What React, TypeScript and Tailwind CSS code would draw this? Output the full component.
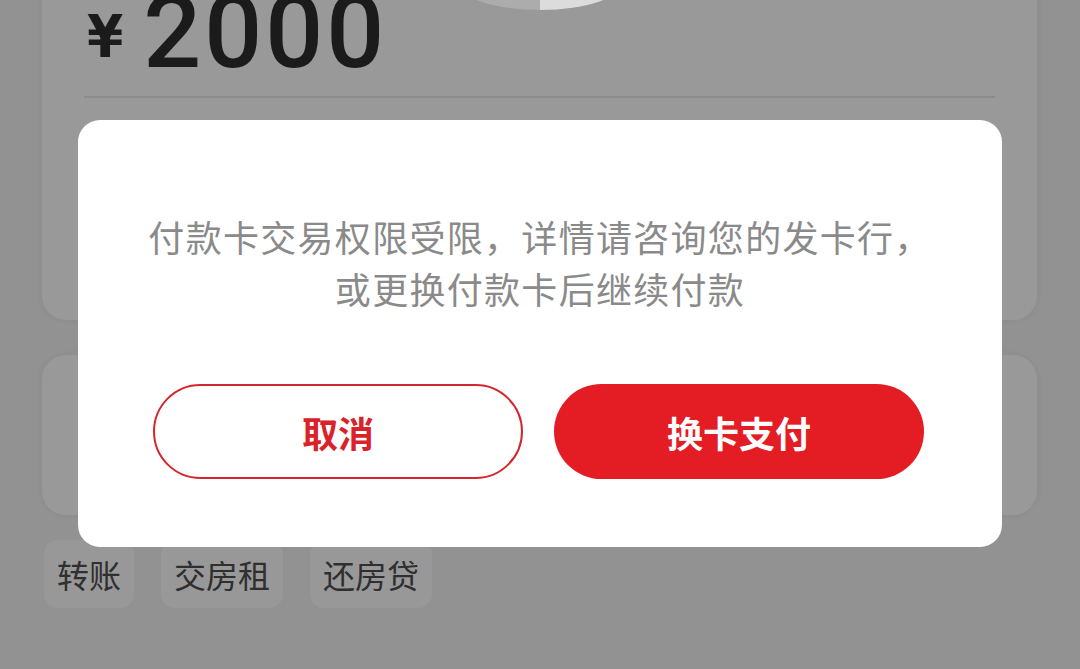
import React from "react";

const cjk = { fontFamily: '"Noto Sans CJK SC", "Noto Sans", sans-serif' };

export default function App() {
  return (
    <div
      className="relative w-[1080px] h-[669px] overflow-hidden bg-[#929292]"
      style={cjk}
    >
      {/* page underneath (dimmed) */}
      <div className="flex flex-col pl-[42px] pr-[43px]">
        {/* amount card */}
        <div className="relative -mt-[40px] h-[360px] rounded-[24px] bg-[#999999] px-[42px] shadow-[0_0_6px_rgba(0,0,0,0.06)]">
          <div className="absolute left-1/2 top-[-10px] h-[60px] w-[170px] -translate-x-1/2 overflow-hidden rounded-[50%] flex">
            <div className="flex-1 bg-[#acacac]" />
            <div className="flex-1 bg-[#dcdcdc]" />
          </div>
          <div className="flex items-end h-[118px] gap-[20px] pl-[3px]">
            <span
              className="text-[58px] leading-none font-bold text-[#1b1b1b] mb-[12px]"
              style={{ fontFamily: '"DejaVu Sans Condensed", "Liberation Sans", sans-serif' }}
            >
              ¥
            </span>
            <span
              className="text-[102px] leading-none font-medium text-[#1b1b1b] tracking-[3px] mb-[-5px]"
              style={{ fontFamily: 'Roboto, sans-serif' }}
            >
              2000
            </span>
          </div>
          <div className="mt-[18px] h-[1.5px] bg-[#8b8b8b]" />
        </div>

        {/* second card */}
        <div className="mt-[35px] h-[160px] rounded-[24px] bg-[#999999] shadow-[0_0_6px_rgba(0,0,0,0.06)]" />

        {/* chips */}
        <div className="mt-[25px] flex gap-[27px] pl-[2px]">
          <div className="h-[68px] rounded-[14px] bg-[#989898] px-[13px] flex items-center text-[32px] text-[#2f2f2f]">
            转账
          </div>
          <div className="h-[68px] rounded-[14px] bg-[#989898] px-[13px] flex items-center text-[32px] text-[#2f2f2f]">
            交房租
          </div>
          <div className="h-[68px] rounded-[14px] bg-[#989898] px-[13px] flex items-center text-[32px] text-[#2f2f2f]">
            还房贷
          </div>
        </div>
      </div>

      {/* dialog */}
      <div className="absolute left-[78px] top-[120px] w-[924px] h-[427px] rounded-[22px] bg-white flex flex-col items-center pt-[90px]">
        <p className="text-center text-[36px] leading-[52px] tracking-[1.3px] text-[#8a8a8a]">
          付款卡交易权限受限，详情请咨询您的发卡行，
          <br />
          或更换付款卡后继续付款
        </p>
        <div className="mt-[70px] flex gap-[31px] pr-[3px]">
          <button className="w-[370px] h-[95px] rounded-full border-[2px] border-[#d3272d] bg-white text-[36px] font-bold text-[#d9222a]">
            取消
          </button>
          <button className="w-[370px] h-[95px] rounded-full bg-[#e41c23] text-[36px] font-bold text-white">
            换卡支付
          </button>
        </div>
      </div>
    </div>
  );
}
